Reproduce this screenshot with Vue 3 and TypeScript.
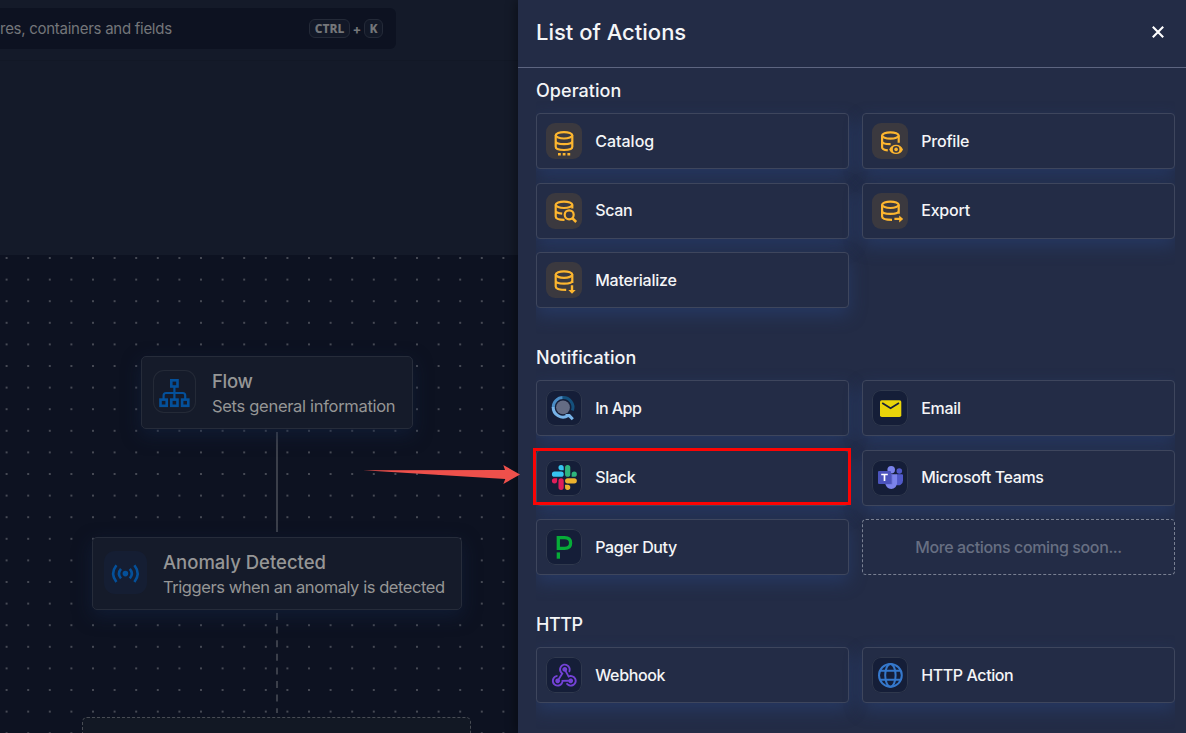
<script setup lang="ts">
interface Action {
  name: string
  icon: string
  tone: 'amber' | 'dark'
  tracking: number
}
interface Group {
  title: string
  tracking: number
  actions: Action[]
  soon?: boolean
  marked?: boolean
}

const groups: Group[] = [
  {
    title: 'Operation',
    tracking: 0.05,
    actions: [
      { name: 'Catalog', icon: 'catalog', tone: 'amber', tracking: 0 },
      { name: 'Profile', icon: 'profile', tone: 'amber', tracking: -0.2 },
      { name: 'Scan', icon: 'scan', tone: 'amber', tracking: -0.3 },
      { name: 'Export', icon: 'export', tone: 'amber', tracking: -0.2 },
      { name: 'Materialize', icon: 'materialize', tone: 'amber', tracking: -0.23 },
    ],
  },
  {
    title: 'Notification',
    tracking: 0.05,
    soon: true,
    marked: true,
    actions: [
      { name: 'In App', icon: 'inapp', tone: 'dark', tracking: -0.55 },
      { name: 'Email', icon: 'email', tone: 'dark', tracking: -0.3 },
      { name: 'Slack', icon: 'slack', tone: 'dark', tracking: -0.3 },
      { name: 'Microsoft Teams', icon: 'teams', tone: 'dark', tracking: -0.34 },
      { name: 'Pager Duty', icon: 'pager', tone: 'dark', tracking: -0.35 },
    ],
  },
  {
    title: 'HTTP',
    tracking: -0.5,
    actions: [
      { name: 'Webhook', icon: 'webhook', tone: 'dark', tracking: -0.35 },
      { name: 'HTTP Action', icon: 'globe', tone: 'dark', tracking: -0.4 },
    ],
  },
]
</script>

<template>
  <div class="page">
    <div class="workspace">
      <div class="topbar">
        <div class="search">
          <span class="hint">res, containers and fields</span>
          <span class="keys"><kbd class="wide">CTRL</kbd><i>+</i><kbd>K</kbd></span>
        </div>
      </div>
      <div class="band"></div>
      <div class="canvas">
        <svg class="dots" width="518" height="478">
          <defs>
            <pattern id="dot" x="-4.2" y="-7.8" width="21.6" height="21.6" patternUnits="userSpaceOnUse">
              <circle cx="10.8" cy="10.8" r="0.9" fill="#60636c" />
            </pattern>
          </defs>
          <rect width="518" height="478" fill="url(#dot)" />
        </svg>
        <svg class="edges" width="518" height="478">
          <path d="M277 177V277" stroke="#3b3f4a" stroke-width="2" />
          <path d="M277 358V458" stroke="#3b3f4a" stroke-width="2" stroke-dasharray="7 6.6" />
        </svg>
        <div class="node flow">
          <svg class="node-icon outlined" viewBox="0 0 43 43">
            <g fill="none" stroke="#04509a" stroke-width="2.6">
              <rect x="18.3" y="10.3" width="6.2" height="6.2" />
              <rect x="7.5" y="29.6" width="6.2" height="6.2" />
              <rect x="18.3" y="29.6" width="6.2" height="6.2" />
              <rect x="29.1" y="29.6" width="6.2" height="6.2" />
              <path d="M21.4 16.5V29.5M10.6 29.5V25.5Q10.6 23 13.1 23H29.7Q32.2 23 32.2 25.5V29.5" stroke-width="2.2" />
            </g>
          </svg>
          <div class="node-text">
            <b>Flow</b>
            <span>Sets general information</span>
          </div>
        </div>
        <div class="node anomaly">
          <svg class="node-icon filled" viewBox="0 0 43 43">
            <circle cx="21.4" cy="22.6" r="2.8" fill="#04509a" />
            <path
              d="M17 17.8Q12.9 22.6 17 27.4M25.8 17.8Q29.9 22.6 25.8 27.4M12.4 14.2Q5.9 22.6 12.4 31M30.4 14.2Q36.9 22.6 30.4 31"
              fill="none" stroke="#04509a" stroke-width="2.6" />
          </svg>
          <div class="node-text">
            <b>Anomaly Detected</b>
            <span>Triggers when an anomaly is detected</span>
          </div>
        </div>
        <div class="placeholder"></div>
      </div>
    </div>

    <aside class="panel">
      <header>
        <h1>List of Actions</h1>
        <svg class="close" width="14" height="14" viewBox="0 0 14 14">
          <path d="M1.8 1.8L12.2 12.2M12.2 1.8L1.8 12.2" stroke="#fff" stroke-width="2.1" />
        </svg>
      </header>
      <section v-for="g in groups" :key="g.title">
        <h2 :style="{ letterSpacing: g.tracking + 'px' }">{{ g.title }}</h2>
        <div class="grid">
          <div v-for="a in g.actions" :key="a.name" class="card">
            <svg class="icon" :class="a.tone" viewBox="0 0 36 36" fill="none">
              <g v-if="a.icon === 'catalog'">
                <g stroke="#fdb62f" stroke-width="2.2">
                  <ellipse cx="18" cy="12.3" rx="8.3" ry="3.2" />
                  <path d="M9.7 12.3V23.8C9.7 25.7 13 27 18 27S26.3 25.7 26.3 23.8V12.3M9.7 18C9.7 20 13 21.2 18 21.2S26.3 20 26.3 18" />
                </g>
                <path d="M12 30h2.8v2.6H12zM16.7 30h2.8v2.6h-2.8zM21.4 30h2.8v2.6h-2.8z" fill="#fdb62f" />
              </g>
              <g v-else-if="a.icon === 'profile'">
                <g stroke="#fdb62f" stroke-width="2.2">
                  <ellipse cx="18.4" cy="12.5" rx="8.3" ry="3.2" />
                  <path d="M26.7 12.5V19.8M10.1 12.5V24.3C10.1 25.9 12.3 27 15.8 27.4M10.1 18.2C10.1 20 13 21.2 18.6 21.2" />
                </g>
                <path fill-rule="evenodd" fill="#fdb62f" d="M17.2 26.4C18.4 23.5 21 21.7 24.1 21.7S29.8 23.5 31 26.4C29.8 29.3 27.2 31 24.1 31S18.4 29.3 17.2 26.4ZM24.1 23.1A3.3 3.3 0 1 0 24.1 29.7A3.3 3.3 0 1 0 24.1 23.1Z" />
                <circle cx="24.1" cy="26.4" r="1.8" fill="#fdb62f" />
              </g>
              <g v-else-if="a.icon === 'scan'" stroke="#fdb62f" stroke-width="2.2">
                <ellipse cx="18" cy="11.8" rx="8.3" ry="3.2" />
                <path d="M26.3 11.8V15.6M9.7 11.8V23.6C9.7 25.5 13 26.9 18.5 26.9M9.7 17.7C9.7 19.2 11.8 20.2 16.2 20.6" />
                <circle cx="23.2" cy="21.8" r="4.5" />
                <path d="M26.2 25L30.2 29" stroke-width="2.5" />
              </g>
              <g v-else-if="a.icon === 'export'">
                <g stroke="#fdb62f" stroke-width="2.2">
                  <ellipse cx="18.4" cy="11.8" rx="8.3" ry="3.2" />
                  <path d="M26.7 11.8V20.8M10.1 11.8V23.6C10.1 25.6 13.5 26.9 20 26.9M10.1 17.7C10.1 19.7 13.4 20.9 18.4 20.9S26.7 19.7 26.7 17.7" />
                </g>
                <path d="M22.4 24.7h4.8v-2.3l4 3.5-4 3.5v-2.3h-4.8z" fill="#fdb62f" />
              </g>
              <g v-else-if="a.icon === 'materialize'">
                <g stroke="#fdb62f" stroke-width="2.2">
                  <ellipse cx="18" cy="12.6" rx="8.3" ry="3.2" />
                  <path d="M26.3 12.6V21M9.7 12.6V24.4C9.7 26.4 13.1 27.8 20.2 27.8M9.7 18.5C9.7 20.5 13 21.7 18 21.7S26.3 20.5 26.3 18.5" />
                </g>
                <path d="M24.8 23.2h2.4v4.7h2.5L26 31.8l-3.7-3.9h2.5z" fill="#fdb62f" />
              </g>
              <g v-else-if="a.icon === 'inapp'">
                <path d="M7.2 17.6A9.8 9.8 0 0 1 17 7.6" stroke="#4a8cc4" stroke-width="3" />
                <path d="M16.4 7.6A9.8 9.8 0 0 1 26.4 20.6" stroke="#14507c" stroke-width="3" />
                <path d="M7.2 17A9.8 9.8 0 0 0 22.2 25.6M19.5 25.6H23.3L26.8 29.2" stroke="#78b3e8" stroke-width="3" />
                <circle cx="17" cy="17.4" r="6.9" fill="#646c84" />
              </g>
              <g v-else-if="a.icon === 'email'">
                <rect x="8" y="10.3" width="21.3" height="16.8" rx="1.8" fill="#e9d40a" />
                <path d="M10.2 13L18.6 18.3L27 13" stroke="#172039" stroke-width="1.7" />
              </g>
              <g v-else-if="a.icon === 'slack'" transform="translate(5.9 5) scale(1.04)">
                <path fill="#e01e5a" d="M5.042 15.165a2.528 2.528 0 0 1-2.52 2.523A2.528 2.528 0 0 1 0 15.165a2.527 2.527 0 0 1 2.522-2.52h2.52v2.52zM6.313 15.165a2.527 2.527 0 0 1 2.521-2.52 2.527 2.527 0 0 1 2.521 2.52v6.313A2.528 2.528 0 0 1 8.834 24a2.528 2.528 0 0 1-2.521-2.522v-6.313z" />
                <path fill="#36c5f0" d="M8.834 5.042a2.528 2.528 0 0 1-2.521-2.52A2.528 2.528 0 0 1 8.834 0a2.528 2.528 0 0 1 2.521 2.522v2.52H8.834zM8.834 6.313a2.528 2.528 0 0 1 2.521 2.521 2.528 2.528 0 0 1-2.521 2.521H2.522A2.528 2.528 0 0 1 0 8.834a2.528 2.528 0 0 1 2.522-2.521h6.312z" />
                <path fill="#2eb67d" d="M18.956 8.834a2.528 2.528 0 0 1 2.522-2.521A2.528 2.528 0 0 1 24 8.834a2.528 2.528 0 0 1-2.522 2.521h-2.522V8.834zM17.688 8.834a2.528 2.528 0 0 1-2.523 2.521 2.527 2.527 0 0 1-2.52-2.521V2.522A2.527 2.527 0 0 1 15.165 0a2.528 2.528 0 0 1 2.523 2.522v6.312z" />
                <path fill="#ecb22e" d="M15.165 18.956a2.528 2.528 0 0 1 2.523 2.522A2.528 2.528 0 0 1 15.165 24a2.527 2.527 0 0 1-2.52-2.522v-2.522h2.52zM15.165 17.688a2.527 2.527 0 0 1-2.52-2.523 2.526 2.526 0 0 1 2.52-2.52h6.313A2.527 2.527 0 0 1 24 15.165a2.528 2.528 0 0 1-2.522 2.523h-6.313z" />
              </g>
              <g v-else-if="a.icon === 'teams'">
                <circle cx="27.3" cy="11" r="2.8" fill="#5059c9" />
                <path d="M24 14.2H30A1 1 0 0 1 31 15.2V20.6A4.4 4.4 0 0 1 24 24.4Z" fill="#5059c9" />
                <circle cx="19.2" cy="9.7" r="3.8" fill="#7b83eb" />
                <path d="M13.3 14.2H24A1.1 1.1 0 0 1 25.1 15.3V23A5.9 5.9 0 0 1 13.3 23Z" fill="#7b83eb" />
                <path d="M13.3 14.2H20.2V24.2H13.4Z" fill="#5a62c3" />
                <rect x="6" y="11" width="13" height="13" rx="1.1" fill="#4b53bc" />
                <path d="M9.2 14.5H15.8M12.5 14V21.1" stroke="#fff" stroke-width="1.7" />
              </g>
              <g v-else-if="a.icon === 'pager'">
                <path d="M12.3 21V8.6H18.6C22.5 8.6 24.6 10.6 24.6 13.9S22.5 19.3 18.6 19.3H12.3" stroke="#06ac38" stroke-width="3.3" />
                <rect x="10.7" y="23.4" width="3.3" height="6.3" fill="#06ac38" />
              </g>
              <path v-else-if="a.icon === 'webhook'" fill="#7342d6" transform="translate(3.2 3.2) scale(1.26)" d="M10.46 19C9 21.07 6.15 21.59 4.09 20.15C2.04 18.71 1.56 15.84 3 13.75C3.87 12.5 5.21 11.83 6.58 11.77L6.63 13.2C5.72 13.27 4.84 13.74 4.27 14.56C3.27 16 3.58 17.94 4.95 18.91C6.33 19.87 8.26 19.5 9.26 18.07C9.57 17.62 9.75 17.13 9.82 16.63V15.62L15.4 15.58L15.47 15.47C16 14.55 17.15 14.23 18.05 14.75C18.95 15.27 19.26 16.43 18.73 17.35C18.2 18.26 17.04 18.58 16.14 18.06C15.73 17.83 15.44 17.46 15.31 17.04L11.24 17.06C11.13 17.73 10.87 18.38 10.46 19M17.74 11.86C20.27 12.17 22.07 14.44 21.76 16.93C21.45 19.43 19.15 21.2 16.62 20.89C15.13 20.71 13.9 19.86 13.19 18.68L14.43 17.96C14.92 18.73 15.75 19.28 16.75 19.41C18.5 19.62 20.05 18.43 20.26 16.76C20.47 15.09 19.23 13.56 17.5 13.35C16.96 13.29 16.44 13.36 15.97 13.53L15.12 13.97L12.54 9.2H12.32C11.26 9.16 10.41 8.29 10.44 7.25C10.47 6.21 11.4 5.4 12.45 5.44C13.5 5.5 14.33 6.35 14.3 7.39C14.28 7.83 14.11 8.23 13.84 8.54L15.74 12.05C16.36 11.85 17.04 11.78 17.74 11.86M8.25 9.14C7.25 6.79 8.31 4.1 10.62 3.12C12.94 2.14 15.62 3.25 16.62 5.6C17.21 6.97 17.09 8.47 16.42 9.67L15.18 8.95C15.6 8.14 15.67 7.15 15.27 6.22C14.59 4.62 12.78 3.85 11.23 4.5C9.67 5.16 8.97 7 9.65 8.6C9.93 9.26 10.4 9.77 10.97 10.11L11.36 10.32L8.29 15.31C8.32 15.36 8.36 15.42 8.39 15.5C8.88 16.41 8.54 17.56 7.62 18.05C6.71 18.54 5.56 18.18 5.06 17.24C4.57 16.31 4.91 15.16 5.83 14.67C6.22 14.46 6.65 14.41 7.06 14.5L9.37 10.73C8.9 10.3 8.5 9.76 8.25 9.14Z" />
              <g v-else stroke="#3578cc" stroke-width="2">
                <circle cx="18.4" cy="18.3" r="11.4" />
                <ellipse cx="18.4" cy="18.3" rx="5.2" ry="11.4" />
                <path d="M8 13.8H28.8M8 22.8H28.8" />
              </g>
            </svg>
            <span :style="{ letterSpacing: a.tracking + 'px' }">{{ a.name }}</span>
          </div>
          <div v-if="g.soon" class="soon">More actions coming soon...</div>
        </div>
        <div v-if="g.marked" class="mark"></div>
      </section>
    </aside>

    <svg class="arrow" width="158" height="20" viewBox="0 0 158 20">
      <path d="M0 5.3L142 5L140.3 0L157 9.5L140.3 19L142.3 14Z" fill="#ee504b" />
    </svg>
  </div>
</template>

<style>
body {
  background: #0d1322;
  overflow: hidden;
}
</style>

<style scoped>
.page {
  position: relative;
  display: flex;
  width: 1186px;
  height: 733px;
  overflow: hidden;
  font-family: Inter, "Open Sans", sans-serif;
}
.workspace {
  width: 518px;
  flex: none;
  display: flex;
  flex-direction: column;
}
.topbar {
  box-sizing: border-box;
  height: 61px;
  padding-top: 8px;
  background: #141a29;
  border-bottom: 1px solid #121826;
}
.search {
  box-sizing: border-box;
  display: flex;
  align-items: center;
  justify-content: space-between;
  width: 396px;
  height: 41px;
  padding-right: 13px;
  border-radius: 0 6px 6px 0;
  background: #0d1221;
  color: #74767a;
}
.hint {
  font-size: 15px;
  letter-spacing: -0.27px;
}
.keys {
  display: flex;
  align-items: center;
  font-size: 13px;
  font-weight: 700;
}
.keys i {
  width: 14px;
  text-align: center;
  font-style: normal;
}
kbd {
  box-sizing: border-box;
  width: 19px;
  height: 19px;
  border: 1px solid #242a38;
  border-radius: 6px;
  background: #121827;
  font: 800 12px/17px "Noto Sans", sans-serif;
  text-align: center;
}
kbd.wide {
  width: 41px;
}
.band {
  height: 194px;
  background: #141a29;
}
.canvas {
  position: relative;
  flex: 1;
  background: #0d1221;
}
.dots,
.edges {
  position: absolute;
  left: 0;
  top: 0;
}
.node {
  position: absolute;
  box-sizing: border-box;
  display: flex;
  align-items: flex-start;
  padding: 13px 11px;
  gap: 16px;
  height: 73px;
  border: 1px solid #262c3a;
  border-radius: 5px;
  background: #151b2a;
  box-shadow: 0 6px 18px rgba(20, 38, 70, 0.5);
}
.flow {
  left: 141px;
  top: 101px;
  width: 272px;
}
.anomaly {
  left: 92px;
  top: 282px;
  width: 370px;
}
.node-icon {
  box-sizing: border-box;
  flex: none;
  width: 43px;
  height: 43px;
  border-radius: 11px;
}
.outlined {
  box-shadow: inset 0 0 0 1px #242a37;
}
.filled {
  background: #151e33;
}
.node-text {
  display: flex;
  flex-direction: column;
  white-space: nowrap;
  color: #959696;
}
.node-text b {
  font-size: 18.5px;
  line-height: 22px;
  font-weight: 500;
  letter-spacing: 0;
}
.node-text span {
  margin-top: 2px;
  font-size: 16.5px;
  line-height: 25px;
  letter-spacing: -0.3px;
}
.flow b {
  letter-spacing: -0.3px;
}
.anomaly span {
  letter-spacing: -0.44px;
}
.placeholder {
  position: absolute;
  box-sizing: border-box;
  left: 82px;
  top: 462px;
  width: 389px;
  height: 74px;
  border: 1px dashed #484c54;
  border-radius: 5px;
  background: #121824;
}
.panel {
  position: relative;
  flex: 1;
  background: #232c46;
  color: #f4f5f7;
  box-shadow: -2px 0 10px rgba(0, 0, 0, 0.4);
}
header {
  box-sizing: border-box;
  display: flex;
  align-items: center;
  justify-content: space-between;
  height: 68px;
  padding: 0 21px 4px 18px;
  border-bottom: 1px solid #5d6580;
}
h1 {
  margin: 0;
  font-size: 22px;
  font-weight: 500;
  letter-spacing: 0;
}
section {
  position: relative;
  padding: 9px 11px 0 18px;
  margin-bottom: 27px;
}
h2 {
  margin: 0 0 9px;
  font-size: 18px;
  line-height: 27px;
  font-weight: 500;
}
.grid {
  display: grid;
  grid-template-columns: 313px 313px;
  grid-auto-rows: 56px;
  gap: 13.5px 13px;
  clip-path: inset(-12px 0 -26px 0);
}
.card {
  box-sizing: border-box;
  display: flex;
  align-items: center;
  gap: 13.2px;
  padding-left: 9px;
  border: 1px solid #3e465d;
  border-radius: 4px;
  background: #232c46;
  box-shadow: 0 7px 18px rgba(43, 75, 139, 0.42);
  font-size: 16px;
  font-weight: 500;
}
.card:nth-child(3) span,
.card:nth-child(4) span {
  padding-bottom: 2px;
}
.icon {
  flex: none;
  width: 36px;
  height: 36px;
  border-radius: 9px;
}
.amber {
  background: #3b393f;
}
.dark {
  background: #151e38;
  box-shadow: inset 0 0 0 1px #2f384d;
}
.mark {
  position: absolute;
  box-sizing: border-box;
  left: 15px;
  top: 113px;
  width: 318px;
  height: 57px;
  border: 3px solid #fb0404;
}
.soon {
  display: flex;
  align-items: center;
  justify-content: center;
  box-sizing: border-box;
  border: 1px dashed #798092;
  border-radius: 4px;
  background: #232c46;
  color: #676f82;
  font-size: 16px;
  font-weight: 500;
  letter-spacing: -0.38px;
}
.arrow {
  position: absolute;
  left: 363px;
  top: 465px;
}
</style>
